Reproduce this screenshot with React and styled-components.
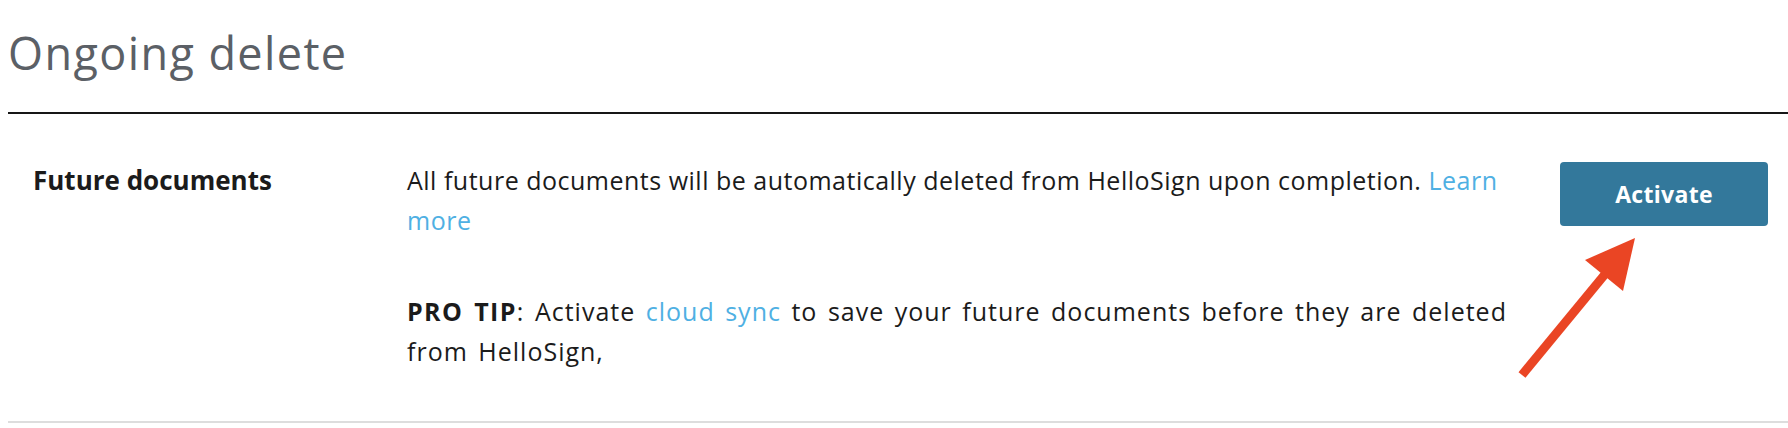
import styled, { createGlobalStyle } from "styled-components";

const GlobalStyle = createGlobalStyle`
	body {
		margin: 8px 0 8px 8px;
		background: #ffffff;
		font-family: "Open Sans", "Liberation Sans", sans-serif;
		color: #1b1b1b;
	}
`;

const Title = styled.h2`
	margin: 0;
	padding-top: 15px;
	height: 60px;
	line-height: 60px;
	padding-bottom: 29px;
	font-size: 45px;
	font-weight: 400;
	letter-spacing: 1.4px;
	color: #5b6066;
	border-bottom: 2px solid #161616;
`;

const Row = styled.div`
	display: grid;
	grid-template-columns: 336px 1fr 208px;
	column-gap: 38px;
	padding: 46px 20px 50px 25px;
	border-bottom: 2px solid #dddddd;
`;

const Label = styled.div`
	font-size: 26px;
	font-weight: 700;
	line-height: 40px;
	color: #1b1b1b;
`;

const Body = styled.div`
	padding-right: 8px;
	font-size: 25px;
	line-height: 40px;
`;

const Paragraph = styled.p`
	margin: 0;
	letter-spacing: ${(p) => (p.$loose ? "1px" : "0.5px")};
	word-spacing: ${(p) => (p.$loose ? "3px" : "0")};

	& + & {
		margin-top: 51px;
	}
`;

const Link = styled.a`
	color: #4fb0e3;
	text-decoration: none;
`;

const Strong = styled.strong`
	font-weight: 700;
	letter-spacing: 1.4px;
`;

const ActionCell = styled.div`
	position: relative;
`;

const Button = styled.button`
	display: block;
	width: 208px;
	height: 64px;
	margin-top: 2px;
	border: none;
	border-radius: 4px;
	background: #33789b;
	color: #ffffff;
	font-family: inherit;
	font-size: 23px;
	font-weight: 700;
	letter-spacing: 0.3px;
	cursor: pointer;
`;

const Arrow = styled.svg`
	position: absolute;
	left: -50px;
	top: 73px;
`;

const PointerArrow = () => (
	<Arrow width="135" height="150" viewBox="0 0 135 150">
		<line x1="12" y1="142" x2="96" y2="40" stroke="#ea4524" strokeWidth="9" />
		<polygon points="125,5 75,27 113,58" fill="#ea4524" />
	</Arrow>
);

export default function App() {
	return (
		<>
			<GlobalStyle />
			<Title>Ongoing delete</Title>
			<Row>
				<Label>Future documents</Label>
				<Body>
					<Paragraph>
						All future documents will be automatically deleted from HelloSign upon
						completion. <Link href="#">Learn more</Link>
					</Paragraph>
					<Paragraph $loose>
						<Strong>PRO TIP</Strong>: Activate <Link href="#">cloud sync</Link> to
						save your future documents before they are deleted from HelloSign,
					</Paragraph>
				</Body>
				<ActionCell>
					<Button>Activate</Button>
					<PointerArrow />
				</ActionCell>
			</Row>
		</>
	);
}
